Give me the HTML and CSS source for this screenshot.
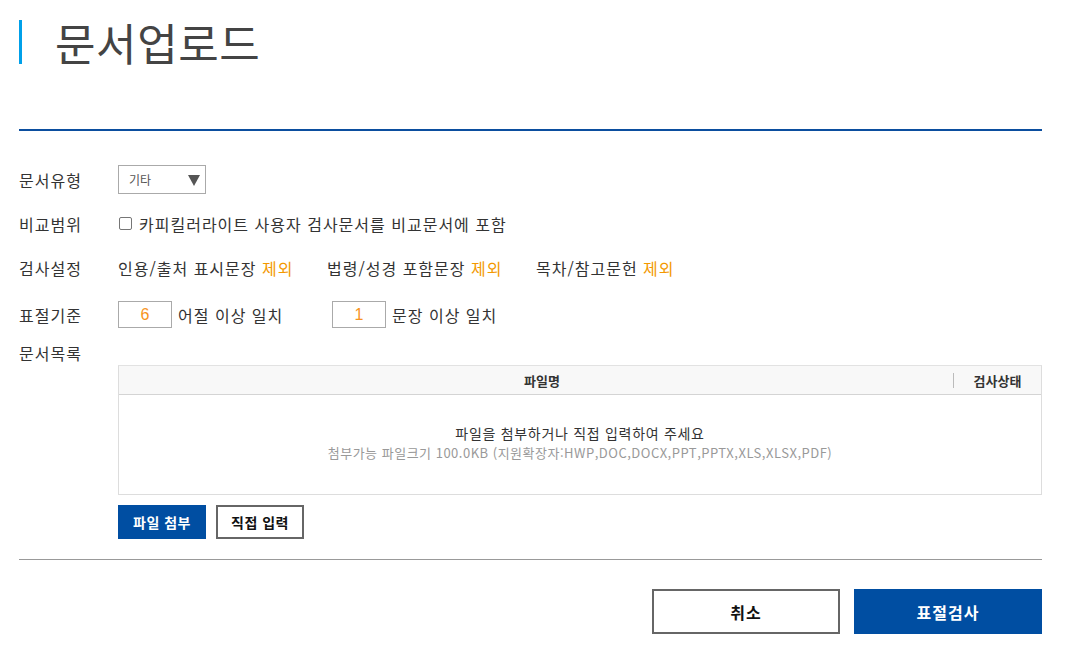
FILE: index.html
```html
<!DOCTYPE html>
<html lang="ko">
<head>
<meta charset="utf-8">
<title>문서업로드</title>
<link rel="stylesheet" href="styles.css">
</head>
<body>
<div class="page">
  <header class="title-wrap">
    <h1 class="title">문서업로드</h1>
  </header>
  <div class="rule"></div>

  <div class="row row-type">
    <div class="label">문서유형</div>
    <div class="select"><span class="select-text">기타</span><span class="arrow"></span></div>
  </div>

  <div class="row row-range">
    <div class="label">비교범위</div>
    <label class="check"><span class="box"></span><span>카피킬러라이트 사용자 검사문서를 비교문서에 포함</span></label>
  </div>

  <div class="row row-set">
    <div class="label">검사설정</div>
    <div class="opt opt-w">인용/출처 표시문장 <span class="orange">제외</span></div>
    <div class="opt opt-w">법령/성경 포함문장 <span class="orange">제외</span></div>
    <div class="opt">목차/참고문헌 <span class="orange">제외</span></div>
  </div>

  <div class="row row-crit">
    <div class="label">표절기준</div>
    <div class="crit crit-w"><span class="num">6</span><span>어절 이상 일치</span></div>
    <div class="crit"><span class="num">1</span><span>문장 이상 일치</span></div>
  </div>

  <div class="label list-label">문서목록</div>
  <div class="list">
    <div class="table">
      <div class="thead">
        <div class="th th-name">파일명</div>
        <div class="sep"></div>
        <div class="th th-state">검사상태</div>
      </div>
      <div class="tbody">
        <p class="msg">파일을 첨부하거나 직접 입력하여 주세요</p>
        <p class="sub">첨부가능 파일크기 100.0KB (지원확장자:HWP,DOC,DOCX,PPT,PPTX,XLS,XLSX,PDF)</p>
      </div>
    </div>
    <div class="btns">
      <div class="btn btn-blue">파일 첨부</div>
      <div class="btn btn-line">직접 입력</div>
    </div>
  </div>

  <div class="hr"></div>

  <div class="actions">
    <div class="act act-line">취소</div>
    <div class="act act-blue">표절검사</div>
  </div>
</div>
</body>
</html>
```

FILE: styles.css
```css
* { box-sizing: border-box; }
html, body { margin: 0; padding: 0; background: #fff; }
body {
  font-family: "Noto Sans CJK KR", "Noto Sans", sans-serif;
  color: #333;
}
.page {
  width: 1023px;
  margin-left: 19px;
}
.title-wrap {
  padding-top: 20px;
  height: 129px;
}
.title {
  margin: 0;
  height: 44px;
  border-left: 3px solid #00a0e9;
  padding-left: 33px;
  font-size: 44px;
  font-weight: 400;
  line-height: 44px;
  color: #444;
  letter-spacing: 0.6px;
}
.rule {
  height: 2px;
  background: #0b4e9f;
}
.row {
  display: flex;
  align-items: center;
  font-size: 16px;
  line-height: 20px;
  letter-spacing: 1px;
}
.label {
  width: 99px;
  flex: none;
  font-size: 16px;
  line-height: 20px;
  letter-spacing: 1px;
  color: #333;
}
.row-type { margin-top: 34px; height: 29px; }
.row-range { margin-top: 15px; height: 29px; }
.row-set { margin-top: 15px; height: 29px; }
.row-crit { margin-top: 19px; height: 27px; }

.select {
  width: 88px;
  height: 29px;
  border: 1px solid #aaa;
  display: flex;
  align-items: center;
  padding-left: 10px;
  position: relative;
  letter-spacing: 0;
}
.select-text { font-size: 12px; color: #555; line-height: 16px; }
.arrow {
  position: absolute;
  right: 5px;
  top: 9px;
  width: 0;
  height: 0;
  border-left: 6px solid transparent;
  border-right: 6px solid transparent;
  border-top: 11px solid #555;
}
.check { display: flex; align-items: center; }
.box {
  width: 13px;
  height: 13px;
  border: 1px solid #767676;
  border-radius: 2px;
  margin-left: 1px;
  margin-right: 7px;
  background: #fff;
}
.opt-w { width: 209px; }
.orange { color: #f39800; }
.crit { display: flex; align-items: center; }
.crit-w { width: 214px; }
.num {
  width: 54px;
  height: 27px;
  border: 1px solid #aaa;
  color: #f7931e;
  font-family: "Liberation Sans", Arial, sans-serif;
  font-size: 16px;
  letter-spacing: 0;
  display: flex;
  align-items: center;
  justify-content: center;
  margin-right: 6px;
}
.list-label { margin-top: 15px; }
.list { margin-left: 99px; margin-top: 2px; }
.table { border: 1px solid #ddd; border-top-color: #e2e2e2; }
.thead {
  height: 29px;
  background: #f8f8f8;
  border-bottom: 1px solid #d4d4d4;
  display: flex;
  align-items: center;
  font-size: 13px;
  font-weight: 700;
  color: #333;
}
.th-name { flex: 1; text-align: center; padding-left: 12px; }
.sep { width: 1px; height: 15px; background: #bbb; }
.th-state { width: 87px; text-align: center; }
.tbody {
  height: 99px;
  display: flex;
  flex-direction: column;
  align-items: center;
  padding-top: 28px;
}
.msg { margin: 0; font-size: 14px; line-height: 20px; letter-spacing: 0.7px; color: #333; }
.sub { margin: 0; font-size: 13px; line-height: 20px; letter-spacing: 0.5px; color: #999; }
.btns { display: flex; gap: 10px; margin-top: 10px; }
.btn {
  width: 88px;
  height: 34px;
  display: flex;
  align-items: center;
  justify-content: center;
  font-size: 14px;
  font-weight: 700;
  letter-spacing: 0.5px;
}
.btn-blue { background: #004ea2; color: #fff; }
.btn-line { border: 2px solid #666; color: #111; }
.hr { height: 1px; background: #999; margin-top: 20px; }
.actions {
  display: flex;
  justify-content: flex-end;
  gap: 14px;
  margin-top: 29px;
}
.act {
  width: 188px;
  height: 45px;
  display: flex;
  align-items: center;
  justify-content: center;
  font-size: 16px;
  font-weight: 700;
  letter-spacing: 1px;
}
.act-line { border: 2px solid #666; color: #111; }
.act-blue { background: #004ea2; color: #fff; }
```
